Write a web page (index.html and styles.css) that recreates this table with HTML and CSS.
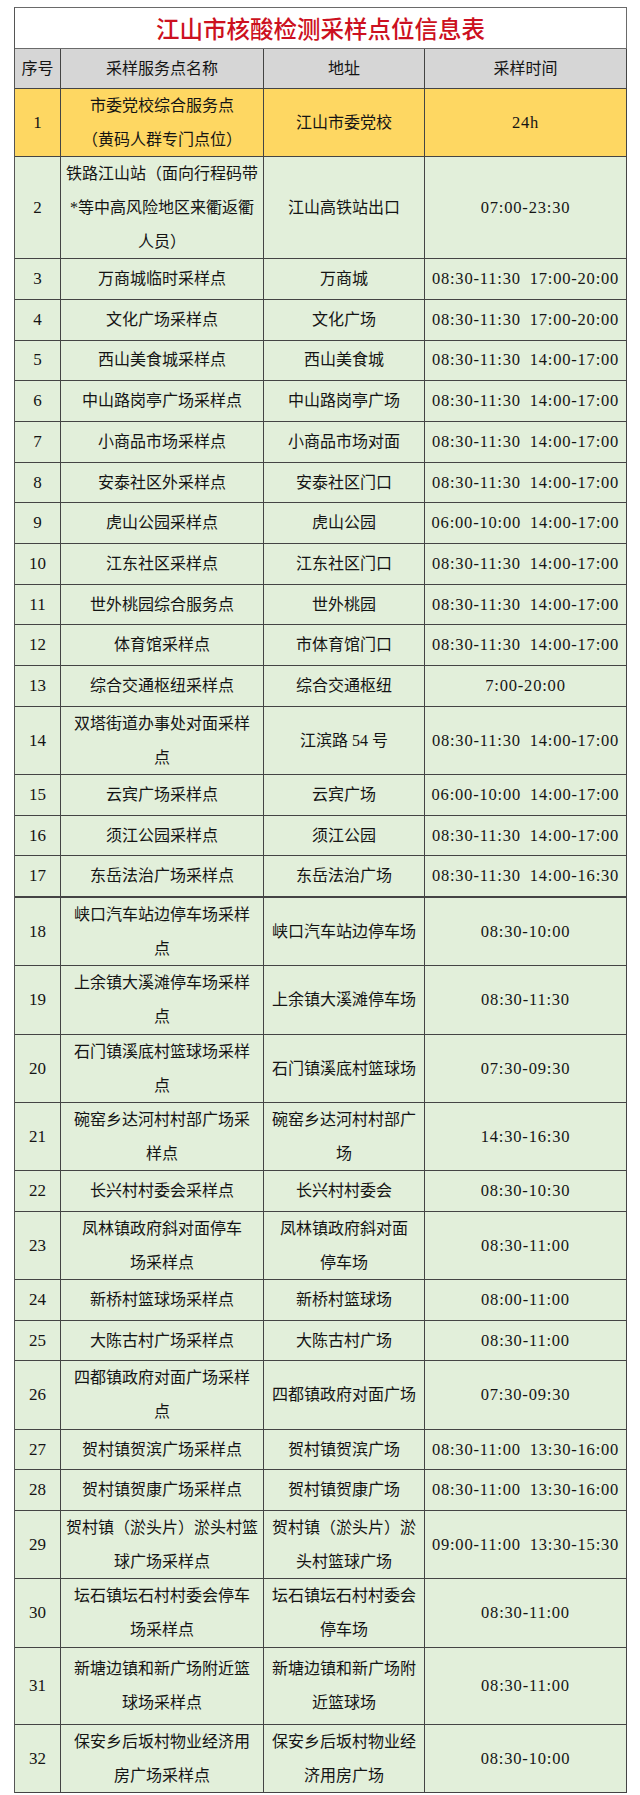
FILE: index.html
```html
<!DOCTYPE html>
<html lang="zh-CN">
<head>
<meta charset="utf-8">
<title>江山市核酸检测采样点位信息表</title>
<link rel="stylesheet" href="styles.css">
</head>
<body>
<div class="sheet">
  <div class="title">江山市核酸检测采样点位信息表</div>
  <div class="row head"><div class="c">序号</div><div class="c">采样服务点名称</div><div class="c">地址</div><div class="c">采样时间</div></div>
  <div class="row dbl hl"><div class="c">1</div><div class="c">市委党校综合服务点<br>（黄码人群专门点位）</div><div class="c">江山市委党校</div><div class="c t">24h</div></div>
  <div class="row tri"><div class="c">2</div><div class="c">铁路江山站（面向行程码带<br>*等中高风险地区来衢返衢<br>人员）</div><div class="c">江山高铁站出口</div><div class="c t">07:00-23:30</div></div>
  <div class="row"><div class="c">3</div><div class="c">万商城临时采样点</div><div class="c">万商城</div><div class="c t">08:30-11:30 17:00-20:00</div></div>
  <div class="row"><div class="c">4</div><div class="c">文化广场采样点</div><div class="c">文化广场</div><div class="c t">08:30-11:30 17:00-20:00</div></div>
  <div class="row"><div class="c">5</div><div class="c">西山美食城采样点</div><div class="c">西山美食城</div><div class="c t">08:30-11:30 14:00-17:00</div></div>
  <div class="row"><div class="c">6</div><div class="c">中山路岗亭广场采样点</div><div class="c">中山路岗亭广场</div><div class="c t">08:30-11:30 14:00-17:00</div></div>
  <div class="row"><div class="c">7</div><div class="c">小商品市场采样点</div><div class="c">小商品市场对面</div><div class="c t">08:30-11:30 14:00-17:00</div></div>
  <div class="row"><div class="c">8</div><div class="c">安泰社区外采样点</div><div class="c">安泰社区门口</div><div class="c t">08:30-11:30 14:00-17:00</div></div>
  <div class="row"><div class="c">9</div><div class="c">虎山公园采样点</div><div class="c">虎山公园</div><div class="c t">06:00-10:00 14:00-17:00</div></div>
  <div class="row"><div class="c">10</div><div class="c">江东社区采样点</div><div class="c">江东社区门口</div><div class="c t">08:30-11:30 14:00-17:00</div></div>
  <div class="row"><div class="c">11</div><div class="c">世外桃园综合服务点</div><div class="c">世外桃园</div><div class="c t">08:30-11:30 14:00-17:00</div></div>
  <div class="row"><div class="c">12</div><div class="c">体育馆采样点</div><div class="c">市体育馆门口</div><div class="c t">08:30-11:30 14:00-17:00</div></div>
  <div class="row"><div class="c">13</div><div class="c">综合交通枢纽采样点</div><div class="c">综合交通枢纽</div><div class="c t">7:00-20:00</div></div>
  <div class="row dbl"><div class="c">14</div><div class="c">双塔街道办事处对面采样<br>点</div><div class="c">江滨路 54 号</div><div class="c t">08:30-11:30 14:00-17:00</div></div>
  <div class="row"><div class="c">15</div><div class="c">云宾广场采样点</div><div class="c">云宾广场</div><div class="c t">06:00-10:00 14:00-17:00</div></div>
  <div class="row"><div class="c">16</div><div class="c">须江公园采样点</div><div class="c">须江公园</div><div class="c t">08:30-11:30 14:00-17:00</div></div>
  <div class="row seam"><div class="c">17</div><div class="c">东岳法治广场采样点</div><div class="c">东岳法治广场</div><div class="c t">08:30-11:30 14:00-16:30</div></div>
  <div class="row dbl"><div class="c">18</div><div class="c">峡口汽车站边停车场采样<br>点</div><div class="c">峡口汽车站边停车场</div><div class="c t">08:30-10:00</div></div>
  <div class="row dbl"><div class="c">19</div><div class="c">上余镇大溪滩停车场采样<br>点</div><div class="c">上余镇大溪滩停车场</div><div class="c t">08:30-11:30</div></div>
  <div class="row dbl"><div class="c">20</div><div class="c">石门镇溪底村篮球场采样<br>点</div><div class="c">石门镇溪底村篮球场</div><div class="c t">07:30-09:30</div></div>
  <div class="row dbl"><div class="c">21</div><div class="c">碗窑乡达河村村部广场采<br>样点</div><div class="c">碗窑乡达河村村部广<br>场</div><div class="c t">14:30-16:30</div></div>
  <div class="row"><div class="c">22</div><div class="c">长兴村村委会采样点</div><div class="c">长兴村村委会</div><div class="c t">08:30-10:30</div></div>
  <div class="row dbl"><div class="c">23</div><div class="c">凤林镇政府斜对面停车<br>场采样点</div><div class="c">凤林镇政府斜对面<br>停车场</div><div class="c t">08:30-11:00</div></div>
  <div class="row"><div class="c">24</div><div class="c">新桥村篮球场采样点</div><div class="c">新桥村篮球场</div><div class="c t">08:00-11:00</div></div>
  <div class="row"><div class="c">25</div><div class="c">大陈古村广场采样点</div><div class="c">大陈古村广场</div><div class="c t">08:30-11:00</div></div>
  <div class="row dbl"><div class="c">26</div><div class="c">四都镇政府对面广场采样<br>点</div><div class="c">四都镇政府对面广场</div><div class="c t">07:30-09:30</div></div>
  <div class="row"><div class="c">27</div><div class="c">贺村镇贺滨广场采样点</div><div class="c">贺村镇贺滨广场</div><div class="c t">08:30-11:00 13:30-16:00</div></div>
  <div class="row"><div class="c">28</div><div class="c">贺村镇贺康广场采样点</div><div class="c">贺村镇贺康广场</div><div class="c t">08:30-11:00 13:30-16:00</div></div>
  <div class="row dbl"><div class="c">29</div><div class="c">贺村镇（淤头片）淤头村篮<br>球广场采样点</div><div class="c">贺村镇（淤头片）淤<br>头村篮球广场</div><div class="c t">09:00-11:00 13:30-15:30</div></div>
  <div class="row dbl"><div class="c">30</div><div class="c">坛石镇坛石村村委会停车<br>场采样点</div><div class="c">坛石镇坛石村村委会<br>停车场</div><div class="c t">08:30-11:00</div></div>
  <div class="row dbl tall"><div class="c">31</div><div class="c">新塘边镇和新广场附近篮<br>球场采样点</div><div class="c">新塘边镇和新广场附<br>近篮球场</div><div class="c t">08:30-11:00</div></div>
  <div class="row dbl"><div class="c">32</div><div class="c">保安乡后坂村物业经济用<br>房广场采样点</div><div class="c">保安乡后坂村物业经<br>济用房广场</div><div class="c t">08:30-10:00</div></div>
</div>
</body>
</html>
```
FILE: styles.css
```css
* {
  box-sizing: border-box;
}

html, body {
  margin: 0;
  padding: 0;
  background: #ffffff;
}

body {
  font-family: "Liberation Serif", "Noto Sans CJK SC", serif;
  font-size: 16px;
  color: #141414;
}

.sheet {
  margin: 7px 0 0 14px;
  width: 613px;
  border-top: 1px solid #6a6a6a;
  border-left: 1px solid #555555;
}

.title {
  height: 41px;
  display: flex;
  align-items: center;
  justify-content: center;
  background: #ffffff;
  color: #cc1020;
  font-family: "Noto Sans CJK SC", sans-serif;
  font-size: 23.5px;
  font-weight: 500;
  border-right: 1px solid #6a6a6a;
  border-bottom: 1px solid #6a6a6a;
}

.row {
  display: grid;
  grid-template-columns: 46px 203px 161px 202px;
  height: 40.7px;
  background: #e2efda;
  border-bottom: 1px solid #444444;
}

.row.head {
  height: 40px;
  background: #d6d6d6;
}

.row.hl {
  background: #fed762;
}

.row.dbl {
  height: 68.25px;
}

.row.tri {
  height: 102px;
}

.row.tall {
  height: 77px;
}

.row.seam {
  border-bottom-width: 2px;
  height: 41.7px;
}

.c {
  display: flex;
  align-items: center;
  justify-content: center;
  text-align: center;
  line-height: 34px;
  border-right: 1px solid #444444;
  white-space: nowrap;
}

.row > .c:first-child {
  font-size: 17px;
}

.row.head > .c:first-child {
  font-size: 16px;
}

.c.t {
  font-size: 16.5px;
  letter-spacing: 0.8px;
  word-spacing: 4px;
}
```
